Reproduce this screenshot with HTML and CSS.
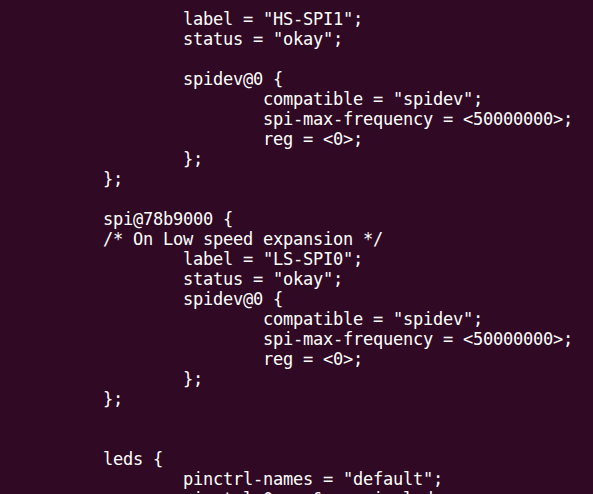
FILE: index.html
```html
<!DOCTYPE html>
<html>
<head>
<meta charset="utf-8">
<link rel="stylesheet" href="styles.css">
</head>
<body>
<pre class="term">        label = "HS-SPI1";
        status = "okay";

        spidev@0 {
                compatible = "spidev";
                spi-max-frequency = &lt;50000000&gt;;
                reg = &lt;0&gt;;
        };
};

spi@78b9000 {
/* On Low speed expansion */
        label = "LS-SPI0";
        status = "okay";
        spidev@0 {
                compatible = "spidev";
                spi-max-frequency = &lt;50000000&gt;;
                reg = &lt;0&gt;;
        };
};


leds {
        pinctrl-names = "default";
        pinctrl-0 = &lt;&amp;msmgpio_leds&gt;,
                    &lt;&amp;pm8916_gpios_leds&gt;,</pre>
</body>
</html>
```
FILE: styles.css
```css
html, body {
  margin: 0;
  padding: 0;
  background: #300a24;
  overflow: hidden;
  height: 494px;
}
.term {
  margin: 0;
  padding: 9px 0 0 103px;
  font-family: "DejaVu Sans Mono", monospace;
  font-size: 17px;
  letter-spacing: -0.235px;
  line-height: 20px;
  color: #ffffff;
  white-space: pre;
}
```
